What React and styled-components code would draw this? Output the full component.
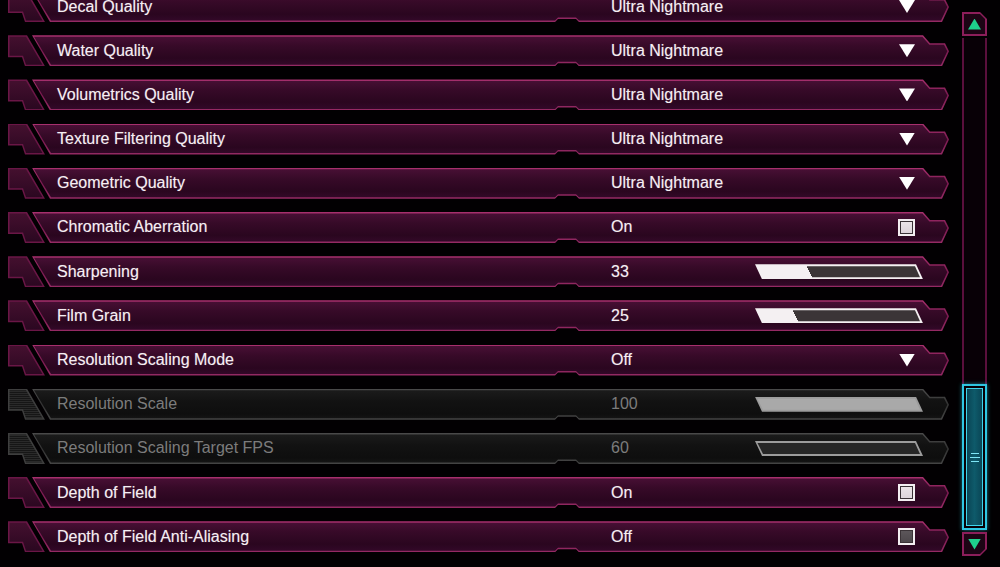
import React from 'react';
import styled, { createGlobalStyle } from 'styled-components';

const GlobalStyle = createGlobalStyle`
  html, body {
    margin: 0;
    padding: 0;
    background: #020002;
    overflow: hidden;
  }
  body {
    font-family: "Liberation Sans", Arial, sans-serif;
  }
`;

const Screen = styled.div`
  width: 1000px;
  height: 567px;
  display: flex;
  overflow: hidden;
  background: #020002;
`;

const Viewport = styled.div`
  flex: 0 0 955px;
  height: 567px;
  overflow: hidden;
`;

// list is scrolled, first row partly above the top edge
const List = styled.div`
  margin-top: -9px;
  display: flex;
  flex-direction: column;
  gap: 13.2px;
`;

const Row = styled.div`
  display: flex;
  height: 31px;
  padding: 0 6px 0 8px;
`;

const Tab = styled.div`
  position: relative;
  flex: 0 0 37px;
  height: 100%;
  clip-path: polygon(0 0, 19px 0, 37px 100%, 17px 100%, 14px 22px, 0 22px);
  background: ${p => (p.$off ? '#3e3e3e' : '#6a1646')};
  &::before {
    content: '';
    position: absolute;
    inset: 0;
    clip-path: polygon(1.5px 1.5px, 18px 1.5px, 34.5px calc(100% - 1.5px), 18px calc(100% - 1.5px), 15px 20.5px, 1.5px 20.5px);
    background: ${p =>
      p.$off
        ? 'repeating-linear-gradient(to bottom, #2a2a2a 0 1px, #161616 1px 2px)'
        : 'linear-gradient(to bottom, #45102f, #2a0720)'};
  }
`;

const Bar = styled.div`
  position: relative;
  flex: 1;
  margin-left: -13px;
  display: flex;
  align-items: center;
  padding: 0 26px 0 25px;
  clip-path: polygon(0 0, calc(100% - 26px) 0, calc(100% - 19px) 8px, calc(100% - 4px) 8px, 100% 16px, calc(100% - 7px) 100%, 547px 100%, 544px calc(100% - 3px), 526px calc(100% - 3px), 523px 100%, 18px 100%);
  background: ${p =>
    p.$off
      ? 'linear-gradient(to bottom, #4a4a4a, #333 50%, #444)'
      : 'linear-gradient(to bottom, #a8306e, #7a1a50 50%, #952a64)'};
  &::before {
    content: '';
    position: absolute;
    inset: 0;
    clip-path: polygon(2px 1.5px, calc(100% - 26.6px) 1.5px, calc(100% - 19.6px) 9.5px, calc(100% - 5px) 9.5px, calc(100% - 1.7px) 16px, calc(100% - 8px) calc(100% - 1.5px), 547px calc(100% - 1.5px), 544px calc(100% - 4.5px), 526px calc(100% - 4.5px), 523px calc(100% - 1.5px), 19px calc(100% - 1.5px));
    background: ${p =>
      p.$off
        ? 'linear-gradient(to bottom, #1c1c1c, #121212 40%, #0e0e0e 80%, #161616)'
        : 'linear-gradient(to bottom, #4a1036 0%, #370a28 35%, #2a061f 75%, #34092a 100%)'};
  }
  & > * {
    position: relative;
    z-index: 1;
  }
`;

const Label = styled.span`
  flex: 0 0 554px;
  font-size: 16px;
  color: ${p => (p.$off ? '#7c7c7c' : '#f6eef3')};
  text-shadow: ${p => (p.$off ? 'none' : '0 0 1px rgba(255,255,255,0.35)')};
  white-space: nowrap;
`;

const Value = styled(Label)`
  flex: 1;
`;

const Arrow = styled.span`
  width: 16px;
  height: 13px;
  margin-right: 8px;
  background: #ffffff;
  clip-path: polygon(0 0, 100% 0, 50% 100%);
`;

const Check = styled.span`
  box-sizing: border-box;
  width: 17px;
  height: 17px;
  margin-right: 8px;
  border: 2px solid #f3eef1;
  padding: 1px;
  background: linear-gradient(${p => (p.$on ? '#ebe4e8, #ddd4da' : '#5c565a, #4e484c')}) content-box, #3a3236;
`;

const Slider = styled.div`
  position: relative;
  width: 168px;
  height: 15px;
  clip-path: polygon(0 0, calc(100% - 7px) 0, 100% 100%, 7px 100%);
  background: ${p => (p.$off ? '#9c9c9c' : '#f4f0f2')};
  &::before {
    content: '';
    position: absolute;
    inset: 0;
    clip-path: polygon(2.5px 2px, calc(100% - 8px) 2px, calc(100% - 3px) calc(100% - 2px), 8px calc(100% - 2px));
    background: linear-gradient(
      65deg,
      ${p => (p.$off ? '#a9a9a9' : '#f4f0f2')} ${p => p.$value}%,
      ${p => (p.$off ? '#262626' : '#3b3537')} ${p => p.$value}%
    );
  }
`;

const ScrollBar = styled.div`
  flex: 0 0 25px;
  margin-left: 7px;
  padding-top: 12px;
  height: 544px;
  display: flex;
  flex-direction: column;
  gap: 2px;
`;

const ScrollButton = styled.div`
  position: relative;
  flex: 0 0 24px;
  display: flex;
  align-items: center;
  justify-content: center;
  background: #8c1e5a;
  clip-path: ${p =>
    p.$down
      ? 'polygon(0 0, 100% 0, 100% calc(100% - 7px), calc(100% - 7px) 100%, 0 100%)'
      : 'polygon(0 0, calc(100% - 7px) 0, 100% 7px, 100% 100%, 0 100%)'};
  &::before {
    content: '';
    position: absolute;
    inset: 2px;
    background: #1c0414;
    clip-path: ${p =>
      p.$down
        ? 'polygon(0 0, 100% 0, 100% calc(100% - 5px), calc(100% - 5px) 100%, 0 100%)'
        : 'polygon(0 0, calc(100% - 5px) 0, 100% 5px, 100% 100%, 0 100%)'};
  }
`;

const Triangle = styled.span`
  position: relative;
  width: 13px;
  height: 11px;
  background: #1ed08c;
  clip-path: ${p => (p.$down ? 'polygon(0 0, 100% 0, 50% 100%)' : 'polygon(50% 0, 100% 100%, 0 100%)')};
`;

const Track = styled.div`
  flex: 1;
  display: flex;
  flex-direction: column;
  justify-content: flex-end;
  border-left: 2px solid #5a0f3c;
  border-right: 2px solid #5a0f3c;
  background: #080006;
`;

const Thumb = styled.div`
  height: 138px;
  margin: 0 -2px;
  border: 2px solid #2fc6e2;
  box-shadow: 0 0 4px rgba(47, 198, 226, 0.6);
  padding: 2px;
  display: flex;
`;

const ThumbInner = styled.div`
  flex: 1;
  border: 1px solid #3fd4ec;
  background: linear-gradient(to right, #0a4656, #0e5a6a 50%, #0a4656);
  display: flex;
  flex-direction: column;
  align-items: center;
  justify-content: center;
  gap: 3px;
`;

const Grip = styled.span`
  width: ${p => p.$w}px;
  height: 1px;
  background: #7fe6f6;
`;

const rows = [
  { label: 'Decal Quality', value: 'Ultra Nightmare', kind: 'select' },
  { label: 'Water Quality', value: 'Ultra Nightmare', kind: 'select' },
  { label: 'Volumetrics Quality', value: 'Ultra Nightmare', kind: 'select' },
  { label: 'Texture Filtering Quality', value: 'Ultra Nightmare', kind: 'select' },
  { label: 'Geometric Quality', value: 'Ultra Nightmare', kind: 'select' },
  { label: 'Chromatic Aberration', value: 'On', kind: 'check', on: true },
  { label: 'Sharpening', value: '33', kind: 'slider', fill: 33 },
  { label: 'Film Grain', value: '25', kind: 'slider', fill: 25 },
  { label: 'Resolution Scaling Mode', value: 'Off', kind: 'select' },
  { label: 'Resolution Scale', value: '100', kind: 'slider', fill: 100, off: true },
  { label: 'Resolution Scaling Target FPS', value: '60', kind: 'slider', fill: 0, off: true },
  { label: 'Depth of Field', value: 'On', kind: 'check', on: true },
  { label: 'Depth of Field Anti-Aliasing', value: 'Off', kind: 'check', on: false },
];

function Control({ row }) {
  if (row.kind === 'select') return <Arrow />;
  if (row.kind === 'check') return <Check $on={row.on} />;
  return <Slider $value={row.fill} $off={row.off} />;
}

export default function App() {
  return (
    <>
      <GlobalStyle />
      <Screen>
        <Viewport>
          <List>
            {rows.map(row => (
              <Row key={row.label}>
                <Tab $off={row.off} />
                <Bar $off={row.off}>
                  <Label $off={row.off}>{row.label}</Label>
                  <Value $off={row.off}>{row.value}</Value>
                  <Control row={row} />
                </Bar>
              </Row>
            ))}
          </List>
        </Viewport>
        <ScrollBar>
          <ScrollButton>
            <Triangle />
          </ScrollButton>
          <Track>
            <Thumb>
              <ThumbInner>
                <Grip $w={8} />
                <Grip $w={10} />
                <Grip $w={8} />
              </ThumbInner>
            </Thumb>
          </Track>
          <ScrollButton $down>
            <Triangle $down />
          </ScrollButton>
        </ScrollBar>
      </Screen>
    </>
  );
}
